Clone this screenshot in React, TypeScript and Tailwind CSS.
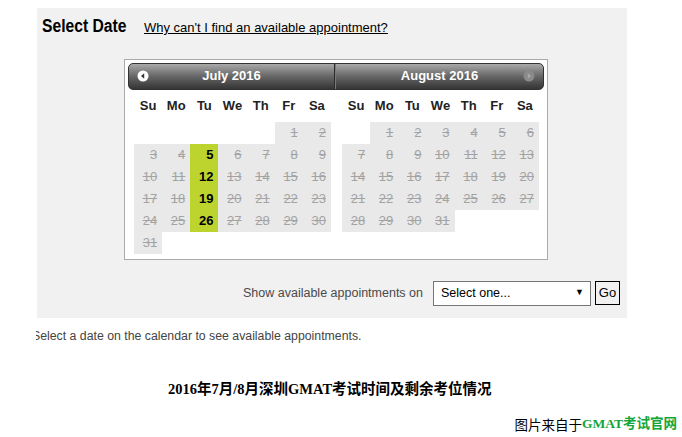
import React from "react";

type Cell = { day: number; open?: boolean } | null;

const DAY_NAMES = ["Su", "Mo", "Tu", "We", "Th", "Fr", "Sa"];

function buildWeeks(startDow: number, days: number, openDays: number[]): Cell[][] {
  const cells: Cell[] = [];
  for (let i = 0; i < startDow; i++) cells.push(null);
  for (let d = 1; d <= days; d++) cells.push({ day: d, open: openDays.includes(d) });
  while (cells.length % 7 !== 0) cells.push(null);
  const weeks: Cell[][] = [];
  for (let i = 0; i < cells.length; i += 7) weeks.push(cells.slice(i, i + 7));
  return weeks;
}

const july = buildWeeks(5, 31, [5, 12, 19, 26]);
const august = buildWeeks(1, 31, []);

function MonthGrid({ weeks }: { weeks: Cell[][] }) {
  return (
    <div className="w-[197px]">
      <div className="grid grid-cols-7 h-[32px] items-center">
        {DAY_NAMES.map((d) => (
          <div key={d} className="text-center text-[13px] font-bold text-[#222]">
            {d}
          </div>
        ))}
      </div>
      {weeks.map((week, wi) => (
        <div key={wi} className="grid grid-cols-7 h-[22px]">
          {week.map((c, ci) =>
            c === null ? (
              <div key={ci} />
            ) : c.open ? (
              <div
                key={ci}
                className="bg-[#bdd42f] text-right pr-[5px] text-[13px] leading-[22px] font-bold text-black"
              >
                {c.day}
              </div>
            ) : (
              <div
                key={ci}
                className="bg-[#e9e9e9] text-right pr-[5px] text-[13px] leading-[22px] text-[#a3a3a3] line-through"
              >
                {c.day}
              </div>
            )
          )}
        </div>
      ))}
    </div>
  );
}

function NavIcon({ dir, disabled }: { dir: "prev" | "next"; disabled?: boolean }) {
  return (
    <svg width="12" height="12" viewBox="0 0 12 12">
      <circle cx="6" cy="6" r="5.5" fill={disabled ? "#8a8a8a" : "#ffffff"} />
      {dir === "prev" ? (
        <path d="M7.2 3.2 L4 6 L7.2 8.8 Z" fill="#333" />
      ) : (
        <path d="M4.8 3.2 L8 6 L4.8 8.8 Z" fill={disabled ? "#a9a9a9" : "#333"} />
      )}
    </svg>
  );
}

export default function App() {
  return (
    <div className="w-[682px] h-[437px] bg-white overflow-hidden font-['Liberation_Sans',Arial,sans-serif]">
      <div className="mt-[8px] ml-[37px] w-[590px] h-[310px] bg-[#f1f1f1] flex flex-col">
        <div className="pt-[7px] pl-[5px] flex items-baseline gap-[18px]">
          <h2 className="w-[84px] whitespace-nowrap text-[18px] leading-[22px] font-bold text-black">
            <span className="inline-block origin-left scale-x-[0.87]">Select Date</span>
          </h2>
          <a href="#" className="text-[13px] underline text-black">
            Why can't I find an available appointment?
          </a>
        </div>

        <div className="mt-[21px] ml-[87px] w-[424px] border border-[#aaaaaa] bg-white pt-[3px] px-[3px] pb-[5px]">
          <div className="flex h-[27px] rounded-[5px] border border-[#333] overflow-hidden bg-linear-to-b from-[#a9a9a9] via-[#666666] to-[#353535]">
            <div className="w-[206px] relative flex items-center justify-center border-r border-[#2b2b2b]">
              <span className="absolute left-[8px] top-[6px]">
                <NavIcon dir="prev" />
              </span>
              <span className="text-[13px] font-bold text-white">July 2016</span>
            </div>
            <div className="flex-1 relative flex items-center justify-center border-l border-[#7a7a7a]">
              <span className="text-[13px] font-bold text-white">August 2016</span>
              <span className="absolute right-[8px] top-[6px]">
                <NavIcon dir="next" disabled />
              </span>
            </div>
          </div>
          <div className="flex">
            <div className="w-[207px] pl-[6px]">
              <MonthGrid weeks={july} />
            </div>
            <div className="flex-1 pl-[7px]">
              <MonthGrid weeks={august} />
            </div>
          </div>
        </div>

        <div className="mt-[21px] pr-[7px] flex items-center justify-end">
          <span className="text-[12.5px] text-[#4a4a4a] mr-[10px]">Show available appointments on</span>
          <div className="w-[158px] h-[25px] border border-[#767676] bg-white flex items-center justify-between pl-[7px] pr-[6px]">
            <span className="text-[12.5px] text-black">Select one...</span>
            <span className="text-[9px] text-black">▼</span>
          </div>
          <button className="ml-[4px] w-[25px] h-[24px] border border-black bg-[#f1f1f1] text-[13px] text-black flex items-center justify-center">
            Go
          </button>
        </div>
      </div>

      <div className="mt-[11px] ml-[36px] w-[400px] overflow-hidden">
        <p className="ml-[-4px] whitespace-nowrap text-[12.3px] leading-[14px] text-[#444]">
          Select a date on the calendar to see available appointments.
        </p>
      </div>

      <div className="mt-[36px] ml-[168px] text-[14.5px] leading-[20px] font-bold text-black font-['Liberation_Serif','Noto_Sans_CJK_SC',serif]">
        2016年7月/8月深圳GMAT考试时间及剩余考位情况
      </div>

      <div className="mt-[16px] pr-[5px] flex justify-end text-[13.5px] leading-[18px] font-['Noto_Sans_CJK_SC',sans-serif]">
        <span className="text-black">图片来自于</span>
        <span className="font-bold text-[#13a538] font-['Liberation_Serif','Noto_Sans_CJK_SC',serif]">GMAT考试官网</span>
      </div>
    </div>
  );
}
